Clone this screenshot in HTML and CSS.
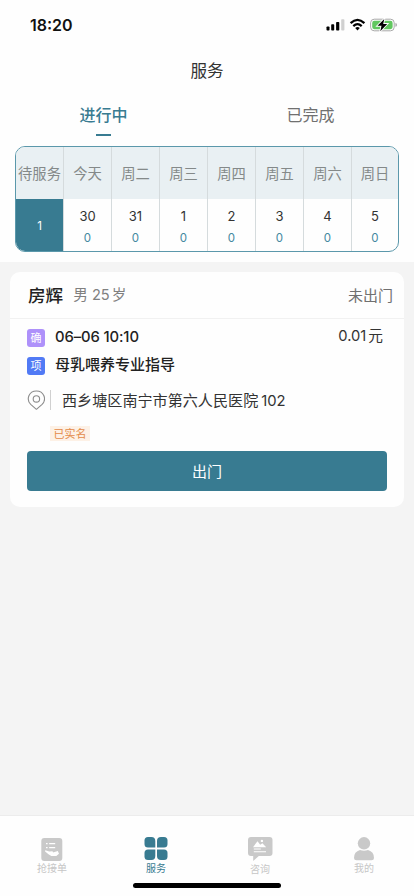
FILE: index.html
```html
<!DOCTYPE html>
<html lang="zh-CN">
<head>
<meta charset="utf-8">
<meta name="viewport" content="width=device-width, initial-scale=1">
<title>服务</title>
<link rel="stylesheet" href="styles.css">
</head>
<body>
<div class="app">
  <header class="top">
    <div class="status">
      <span class="clock">18:20</span>
      <svg class="status-icons" width="72" height="16" viewBox="0 0 72 16">
        <rect x="0.5" y="9.4" width="3" height="4.1" rx="0.8"/>
        <rect x="5.2" y="7.3" width="3" height="6.2" rx="0.8"/>
        <rect x="10.1" y="4.9" width="3.2" height="8.6" rx="0.8"/>
        <rect x="15.2" y="2.2" width="3.2" height="11.3" rx="0.8" fill="#d0d0d0"/>
        <path d="M24.6 6.1Q31.5-.4 38.4 6.1" fill="none" stroke="#000" stroke-width="2.3"/>
        <path d="M27.3 9.1Q31.5 5.2 35.7 9.1" fill="none" stroke="#000" stroke-width="2.2"/>
        <path d="M29.2 11Q31.5 8.9 33.8 11L31.5 13.4Z"/>
        <rect x="44.6" y="2.2" width="23.6" height="11.6" rx="3.6" fill="#fff" stroke="#a9a9a9"/>
        <rect x="46.2" y="3.8" width="20.4" height="8.4" rx="2.1" fill="#61c75f"/>
        <path d="M69.4 6Q71 6.3 71 7.9T69.4 9.8Z" fill="#a9a9a9"/>
        <path d="M58.3 1.9L51.5 8.8H55.5L54.3 14.2L61.2 7H57.2Z" stroke="#fff" stroke-width="1.8" paint-order="stroke"/>
      </svg>
    </div>
    <h1 class="title">服务</h1>
    <nav class="tabs">
      <div class="tab active">进行中</div>
      <div class="tab">已完成</div>
    </nav>
    <div class="week">
      <div class="day pending"><div class="name">待服务</div><div class="body"><span class="total">1</span></div></div>
      <div class="day"><div class="name">今天</div><div class="body"><span class="date">30</span><span class="count">0</span></div></div>
      <div class="day"><div class="name">周二</div><div class="body"><span class="date">31</span><span class="count">0</span></div></div>
      <div class="day"><div class="name">周三</div><div class="body"><span class="date">1</span><span class="count">0</span></div></div>
      <div class="day"><div class="name">周四</div><div class="body"><span class="date">2</span><span class="count">0</span></div></div>
      <div class="day"><div class="name">周五</div><div class="body"><span class="date">3</span><span class="count">0</span></div></div>
      <div class="day"><div class="name">周六</div><div class="body"><span class="date">4</span><span class="count">0</span></div></div>
      <div class="day"><div class="name">周日</div><div class="body"><span class="date">5</span><span class="count">0</span></div></div>
    </div>
  </header>

  <main class="content">
    <article class="card">
      <div class="card-head">
        <span class="patient">房辉</span>
        <span class="info">男 <span class="age">25</span>岁</span>
        <span class="state">未出门</span>
      </div>
      <div class="row">
        <span class="badge confirm">确</span>
        <span class="time">06–06 10:10</span>
        <span class="price">0.01<span class="unit">元</span></span>
      </div>
      <div class="row item">
        <span class="badge project">项</span>
        <span class="project-name">母乳喂养专业指导</span>
      </div>
      <div class="place">
        <svg class="pin" width="18" height="20" viewBox="0 0 18 20" fill="none" stroke="#8c8c8c" stroke-width="1.1">
          <path d="M9.4 19.3L3.7 14.3C-1.2 9.4 1.9 1 9.4 1S20 9.4 15.1 14.3Z" stroke-linejoin="round"/>
          <circle cx="9.4" cy="8.9" r="3.2"/>
        </svg>
        <span class="address">西乡塘区南宁市第六人民医院<span class="room">102</span></span>
      </div>
      <span class="verified">已实名</span>
      <button class="go" type="button">出门</button>
    </article>
  </main>

  <footer class="dock">
    <nav class="menu">
      <div class="entry">
        <svg width="26" height="26" viewBox="0 0 26 26">
          <rect x="2.3" y="2" width="21" height="23" rx="3" fill="#c9c9c9"/>
          <path d="M7 7.6h1.6M10.2 7.6h6M7 11.7h1.6M10.2 11.7h6" stroke="#fff" stroke-width="1.2"/>
          <path d="M6.2 14.3L10.3 15.6 13.5 15.3 14.1 16.5 11.3 17.2 16.4 15.8 18.8 15 20 17.7 17.3 20H12.3L9.5 18.2 6.1 15.5Z" fill="#fff"/>
        </svg>
        <span>抢接单</span>
      </div>
      <div class="entry selected">
        <svg width="26" height="26" viewBox="0 0 26 26" fill="#387b91">
          <path d="M5 1H8.4Q12.3 1 12.3 5V11.5H5Q1.5 11.5 1.5 8V4.5Q1.5 1 5 1Z"/>
          <path d="M14 11.5V5Q14 1 18 1H21Q24.5 1 24.5 4.5V8Q24.5 11.5 21 11.5Z"/>
          <path d="M5 13.5H12.3V20Q12.3 24 8.4 24H5Q1.5 24 1.5 20.5V17Q1.5 13.5 5 13.5Z"/>
          <path d="M14 13.5H21Q24.5 13.5 24.5 17V20.5Q24.5 24 21 24H18Q14 24 14 20Z"/>
        </svg>
        <span>服务</span>
      </div>
      <div class="entry consult">
        <svg width="26" height="26" viewBox="0 0 26 26">
          <path d="M4 1H22.5Q25.5 1 25.5 4V17Q25.5 20 22.5 20H11.8L6.2 25V20H4Q1 20 1 17V4Q1 1 4 1Z" fill="#c9c9c9"/>
          <path d="M6 11.2L10.5 5.2 13.2 8.7 15.4 7.2 19.2 11.2Z" fill="#fff"/>
          <circle cx="14.9" cy="4.9" r="1.2" fill="#fff"/>
          <path d="M6.8 13H13.8M6.8 15.7H19" stroke="#fff" stroke-width="1.1"/>
        </svg>
        <span>咨询</span>
      </div>
      <div class="entry">
        <svg width="26" height="26" viewBox="0 0 26 26" fill="#c9c9c9">
          <circle cx="13" cy="7.3" r="6.2"/>
          <path d="M9 14Q13 15.3 17 14Q23 15.7 23 22Q23 24.3 20.5 24.3H5.5Q3 24.3 3 22Q3 15.7 9 14Z"/>
        </svg>
        <span>我的</span>
      </div>
    </nav>
    <div class="home-bar"></div>
  </footer>
</div>
</body>
</html>
```
FILE: styles.css
```css
* { box-sizing: border-box; }

body {
  margin: 0;
  font-family: Inter, "Noto Sans CJK SC", sans-serif;
  color: #333;
}

.app {
  display: flex;
  flex-direction: column;
  width: 414px;
  height: 896px;
  background: #f4f4f4;
  overflow: hidden;
}

.top {
  height: 262px;
  padding: 0 15px;
  background: #fefefe;
}

.status {
  display: flex;
  justify-content: space-between;
  height: 50px;
  padding: 17px 1px 0 15px;
}

.clock {
  font-size: 16px;
  font-weight: 600;
  line-height: 17px;
  color: #111;
}

.title {
  margin: 0;
  padding-top: 1px;
  height: 40px;
  font-size: 16.6px;
  font-weight: 400;
  line-height: 40px;
  text-align: center;
  color: #333;
}

.tabs {
  display: flex;
  height: 56px;
  margin: 0 -15px;
}

.tab {
  flex: 1;
  display: flex;
  flex-direction: column;
  align-items: center;
  padding-top: 13px;
  font-size: 16px;
  line-height: 24px;
  color: #707070;
}

.tab.active {
  font-weight: 500;
  color: #387b91;
}

.tab.active::after {
  content: "";
  width: 15px;
  height: 2px;
  margin-top: 7px;
  background: #387b91;
}

.week {
  display: flex;
  height: 106px;
  border: 1.4px solid #5b98ab;
  border-radius: 10px;
  overflow: hidden;
}

.day {
  flex: 0 0 48px;
  border-left: 1px solid #d5dbdd;
  text-align: center;
}

.day:first-child {
  flex-basis: 47px;
  border-left: 0;
}

.day:last-child { flex: 1 1 0; }

.name {
  height: 52px;
  background: #e9f0f3;
  font-size: 14.3px;
  line-height: 53px;
  white-space: nowrap;
  color: #848989;
}

.body {
  display: flex;
  flex-direction: column;
  height: 52px;
  padding-top: 6px;
}

.date {
  font-size: 13px;
  line-height: 22px;
  color: #333;
}

.count {
  font-size: 11.5px;
  line-height: 22px;
  color: #4488a0;
}

.pending .body { background: #387b91; }

.total {
  font-size: 11.5px;
  line-height: 42px;
  color: #fff;
}

.content {
  flex: 1;
  padding: 10px 10px 0;
}

.card {
  display: flex;
  flex-direction: column;
  width: 394px;
  height: 235px;
  padding: 0 17px;
  border-radius: 10px;
  background: #fefefe;
}

.card-head {
  display: flex;
  height: 47px;
  margin: 0 -17px;
  padding: 0 11px 0 18px;
  border-bottom: 1px solid #f1f1f1;
  line-height: 47px;
}

.patient {
  font-size: 17.6px;
  font-weight: 500;
  line-height: 48px;
  color: #222;
}

.info {
  margin-left: 10px;
  font-size: 14.6px;
  color: #808080;
}

.age { margin-right: 2px; }

.state {
  margin-left: auto;
  font-size: 15px;
  color: #707070;
}

.row {
  display: flex;
  height: 28px;
  padding-top: 10px;
}

.badge {
  width: 18px;
  height: 18px;
  border-radius: 3px;
  font-size: 11px;
  line-height: 19px;
  text-align: center;
  color: #fff;
}

.confirm { background: #ae91fa; }
.project { background: #517af5; }

.time,
.project-name {
  margin-left: 10px;
  font-size: 15px;
  font-weight: 500;
  line-height: 18px;
  color: #222;
}

.time {
  margin-top: -1px;
  font-size: 14.8px;
  letter-spacing: -0.1px;
}

.project-name { margin-top: -1px; }

.price {
  margin: -2px 4px 0 auto;
  font-size: 14.7px;
  line-height: 18px;
}

.unit { margin-left: 2px; }

.place {
  display: flex;
  margin-top: 15px;
  height: 20px;
}

.address {
  margin-left: 5px;
  padding-left: 11px;
  border-left: 1px solid #d0d0d0;
  font-size: 15.1px;
  line-height: 21px;
}

.room {
  margin-left: 3px;
  font-size: 14.8px;
}

.verified {
  align-self: flex-start;
  width: 40px;
  height: 15px;
  margin: 16px 0 0 23px;
  background: #fdf1e6;
  font-size: 11px;
  line-height: 16px;
  text-align: center;
  color: #e48b49;
}

.go {
  height: 40px;
  margin-top: 10px;
  padding: 0;
  border: 0;
  border-radius: 4px;
  background: #387b91;
  font: 15px/41px Inter, "Noto Sans CJK SC", sans-serif;
  color: #fff;
}

.dock {
  height: 81px;
  border-top: 1px solid #ececec;
  background: #fefefe;
}

.menu {
  display: flex;
  height: 67px;
}

.entry {
  flex: 0 0 104px;
  display: flex;
  flex-direction: column;
  align-items: center;
  padding-top: 20px;
  font-size: 10px;
  line-height: 12px;
  color: #c6c6c6;
}

.selected { color: #387b91; }
.consult span { margin-top: 1px; }

.home-bar {
  width: 148px;
  height: 5px;
  margin: 0 auto;
  border-radius: 3px;
  background: #000;
}
```
